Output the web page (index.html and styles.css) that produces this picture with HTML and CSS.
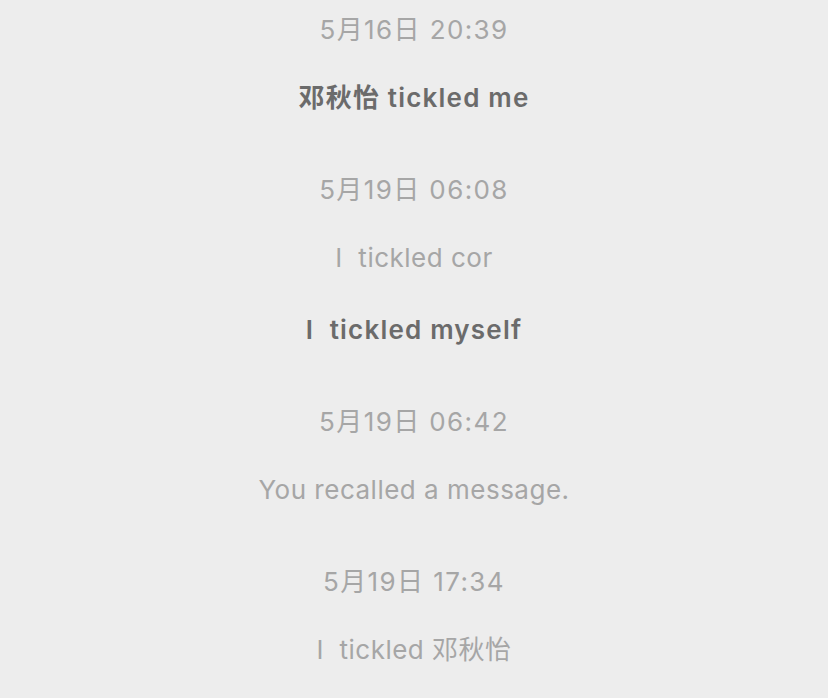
FILE: index.html
```html
<!DOCTYPE html>
<html lang="zh">
<head>
<meta charset="utf-8">
<link rel="stylesheet" href="styles.css">
</head>
<body>
<div class="chat">
  <section class="group first">
    <div class="time">5月16日 20:39</div>
    <div class="msgs">
      <div class="msg strong">邓秋怡 tickled me</div>
    </div>
  </section>
  <section class="group">
    <div class="time">5月19日 06:08</div>
    <div class="msgs">
      <div class="msg">I&nbsp; tickled cor</div>
      <div class="msg strong">I&nbsp; tickled myself</div>
    </div>
  </section>
  <section class="group">
    <div class="time">5月19日 06:42</div>
    <div class="msgs">
      <div class="msg">You recalled a message.</div>
    </div>
  </section>
  <section class="group">
    <div class="time">5月19日 17:34</div>
    <div class="msgs">
      <div class="msg">I&nbsp; tickled 邓秋怡</div>
    </div>
  </section>
</div>
</body>
</html>
```
FILE: styles.css
```css
html, body {
  margin: 0;
  padding: 0;
  background: #ededed;
}
body {
  font-family: Inter, "Noto Sans CJK SC", sans-serif;
  font-size: 26px;
  line-height: 36px;
  color: #a6a6a6;
  overflow: hidden;
  height: 698px;
}
.chat {
  display: flex;
  flex-direction: column;
  align-items: center;
  gap: 56px;
  padding-top: 12px;
}
.group {
  display: flex;
  flex-direction: column;
  align-items: center;
  gap: 32px;
}
.msgs {
  display: flex;
  flex-direction: column;
  align-items: center;
  gap: 36px;
}
.time {
  color: #a6a6a6;
  white-space: nowrap;
  letter-spacing: 1.4px;
}
.msg {
  white-space: nowrap;
  letter-spacing: 0.5px;
}
.msg.strong {
  color: #6b6b6b;
  font-weight: 600;
  letter-spacing: 1.2px;
}
```
